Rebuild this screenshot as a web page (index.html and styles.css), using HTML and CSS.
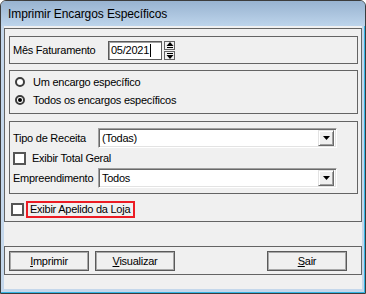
FILE: index.html
```html
<!DOCTYPE html>
<html>
<head>
<meta charset="utf-8">
<link rel="stylesheet" href="styles.css">
</head>
<body>
<div class="window">
  <div class="titlebar"><span class="title">Imprimir Encargos Específicos</span></div>
  <div class="client">
    <div class="panel main">
      <div class="group g1">
        <span class="label">Mês Faturamento</span>
        <div class="edit"><span>05/2021</span><span class="caret"></span></div>
        <div class="spin">
          <div class="spin-btn"><svg width="8" height="7" viewBox="0 0 8 7"><polygon points="4,0 7.5,4 0.5,4" fill="#000"/><rect x="1" y="5" width="6" height="1" fill="#000"/></svg></div>
          <div class="spin-btn"><svg width="8" height="7" viewBox="0 0 8 7"><rect x="1" y="1" width="6" height="1" fill="#000"/><polygon points="0.5,3 7.5,3 4,7" fill="#000"/></svg></div>
        </div>
      </div>
      <div class="group g2">
        <div class="radio-row"><span class="radio"></span><span>Um encargo específico</span></div>
        <div class="radio-row"><span class="radio checked"></span><span>Todos os encargos específicos</span></div>
      </div>
      <div class="group g3">
        <div class="field-row">
          <span class="label field-label">Tipo de Receita</span>
          <div class="combo"><span class="combo-text">(Todas)</span><div class="combo-btn"><svg width="7" height="4" viewBox="0 0 7 4"><polygon points="0,0 7,0 3.5,4" fill="#000"/></svg></div></div>
        </div>
        <div class="check-row"><span class="checkbox"></span><span>Exibir Total Geral</span></div>
        <div class="field-row">
          <span class="label field-label">Empreendimento</span>
          <div class="combo"><span class="combo-text">Todos</span><div class="combo-btn"><svg width="7" height="4" viewBox="0 0 7 4"><polygon points="0,0 7,0 3.5,4" fill="#000"/></svg></div></div>
        </div>
      </div>
      <div class="apelido-row"><span class="checkbox"></span><span class="highlight">Exibir Apelido da Loja</span></div>
    </div>
    <div class="panel buttons">
      <div class="btn"><span><u>I</u>mprimir</span></div>
      <div class="btn"><span><u>V</u>isualizar</span></div>
      <div class="btn btn-right"><span><u>S</u>air</span></div>
    </div>
  </div>
</div>
</body>
</html>
```
FILE: styles.css
```css
* { box-sizing: border-box; }
html, body { margin: 0; padding: 0; background: #ffffff; }
body { font-family: "Liberation Sans", Arial, sans-serif; font-size: 11px; letter-spacing: -0.25px; color: #000; }

.window {
  width: 366px;
  height: 294px;
  border: 1px solid #3c3c3c;
  border-radius: 6px 6px 0 0;
  background: #c4d7eb;
  box-shadow: inset -1px -1px 0 #34b4e4;
  display: flex;
  flex-direction: column;
  overflow: hidden;
}

.titlebar {
  height: 25px;
  flex: none;
  padding: 1px 0 0 7px;
  line-height: 25px;
  background: linear-gradient(#98b3d0, #bdd4eb);
}
.title { font-size: 12px; letter-spacing: -0.1px; color: #000; }

.client {
  flex: 1;
  margin: 0 3px 4px 3px;
  background: #f0f0f0;
  padding-top: 2px;
  display: flex;
  flex-direction: column;
}

.panel { border: 1px solid #646464; }

.main {
  height: 194px;
  padding: 7px 3px 0 4px;
  display: flex;
  flex-direction: column;
}

.group { border: 1px solid #646464; }

.g1 {
  height: 28px;
  display: flex;
  align-items: center;
  padding-left: 3px;
}
.label { white-space: nowrap; }
.g1 .label { width: 95px; }

.edit {
  width: 54px;
  height: 19px;
  background: #fff;
  border: 1px solid #5a5a5a;
  box-shadow: inset 1px 1px 0 #a0a0a0;
  display: flex;
  align-items: center;
  padding-left: 2px;
}
.caret { width: 1px; height: 13px; background: #000; margin-left: 1px; }

.spin {
  margin-left: 2px;
  width: 11px;
  height: 19px;
  display: flex;
  flex-direction: column;
  gap: 1px;
}
.spin-btn {
  flex: 1;
  border: 1px solid #646464;
  background: #f0f0f0;
  display: flex;
  align-items: center;
  justify-content: center;
}

.g2 {
  margin-top: 6px;
  height: 44px;
  padding: 2px 0 0 5px;
  display: flex;
  flex-direction: column;
}
.radio-row {
  height: 18px;
  display: flex;
  align-items: center;
}
.radio {
  width: 10px;
  height: 10px;
  border: 2px solid #3d3d3d;
  border-radius: 50%;
  background: #fff;
  margin-right: 8px;
  display: flex;
  align-items: center;
  justify-content: center;
}
.radio.checked::after {
  content: "";
  width: 4px;
  height: 4px;
  border-radius: 50%;
  background: #000;
}

.g3 {
  margin-top: 7px;
  height: 73px;
  padding: 6px 0 0 3px;
  display: flex;
  flex-direction: column;
}
.field-row {
  height: 20px;
  display: flex;
  align-items: center;
}
.field-label { width: 85px; }
.combo {
  width: 239px;
  height: 20px;
  background: #fff;
  border-style: solid;
  border-width: 1px;
  border-color: #a0a0a0 #ffffff #ffffff #a0a0a0;
  box-shadow: inset 1px 1px 0 #696969, inset -1px -1px 0 #e3e3e3;
  display: flex;
  align-items: center;
  padding: 1px 2px 1px 3px;
}
.combo-text { flex: 1; }
.combo-btn {
  width: 16px;
  height: 16px;
  background: #f0f0f0;
  border-style: solid;
  border-width: 1px;
  border-color: #e3e3e3 #696969 #696969 #e3e3e3;
  box-shadow: inset 1px 1px 0 #fff, inset -1px -1px 0 #a0a0a0;
  display: flex;
  align-items: center;
  justify-content: center;
}
.check-row {
  height: 20px;
  display: flex;
  align-items: center;
}
.checkbox {
  width: 13px;
  height: 13px;
  border: 2px solid #555;
  background: #fff;
  flex: none;
}
.check-row .checkbox { margin-right: 6px; }

.apelido-row {
  margin-top: 7px;
  padding-left: 2px;
  display: flex;
  align-items: center;
}
.apelido-row .checkbox { margin-right: 2px; }
.highlight {
  border: 2px solid #ec1c24;
  height: 17px;
  line-height: 13px;
  padding: 0 3px 0 2px;
}

.buttons {
  margin-top: 24px;
  height: 29px;
  padding: 4px 0 0 4px;
  display: flex;
  gap: 6px;
}
.btn {
  width: 80px;
  height: 20px;
  border: 1px solid #5a5a5a;
  box-shadow: inset 0 0 0 1px #a8a8a8;
  background: #f0f0f0;
  display: flex;
  align-items: center;
  justify-content: center;
}
.btn-right { margin-left: auto; margin-right: 14px; }
```
